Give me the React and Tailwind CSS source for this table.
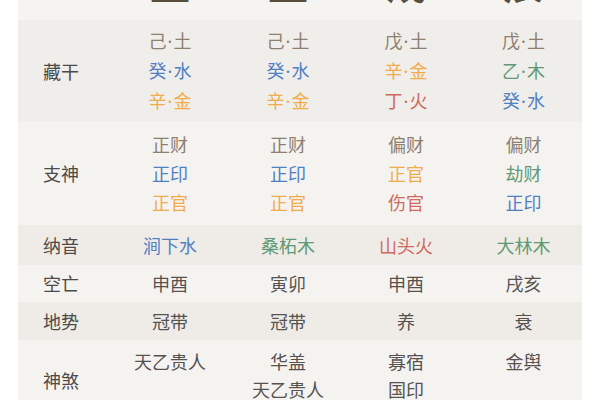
const C = {
  earth: "text-[#8d8070]",
  water: "text-[#4f80c2]",
  metal: "text-[#efab4c]",
  fire: "text-[#cf6a5e]",
  wood: "text-[#5e9a74]",
  plain: "text-[#555250]",
};

const pillars = ["丑", "丑", "戌", "辰"];

const rows = [
  {
    label: "藏干",
    bg: "bg-[#f0eeea]",
    h: "h-[102px]",
    cells: [
      [["己·土", C.earth], ["癸·水", C.water], ["辛·金", C.metal]],
      [["己·土", C.earth], ["癸·水", C.water], ["辛·金", C.metal]],
      [["戊·土", C.earth], ["辛·金", C.metal], ["丁·火", C.fire]],
      [["戊·土", C.earth], ["乙·木", C.wood], ["癸·水", C.water]],
    ],
  },
  {
    label: "支神",
    bg: "bg-[#f5f3f0]",
    h: "h-[103px]",
    cells: [
      [["正财", C.earth], ["正印", C.water], ["正官", C.metal]],
      [["正财", C.earth], ["正印", C.water], ["正官", C.metal]],
      [["偏财", C.earth], ["正官", C.metal], ["伤官", C.fire]],
      [["偏财", C.earth], ["劫财", C.wood], ["正印", C.water]],
    ],
  },
  {
    label: "纳音",
    bg: "bg-[#efece8]",
    h: "h-[40px]",
    cells: [
      [["涧下水", C.water]],
      [["桑柘木", C.wood]],
      [["山头火", C.fire]],
      [["大林木", C.wood]],
    ],
  },
  {
    label: "空亡",
    bg: "bg-[#f5f3f0]",
    h: "h-[37px]",
    cells: [[["申酉", C.plain]], [["寅卯", C.plain]], [["申酉", C.plain]], [["戌亥", C.plain]]],
  },
  {
    label: "地势",
    bg: "bg-[#efece8]",
    h: "h-[38px]",
    cells: [[["冠带", C.plain]], [["冠带", C.plain]], [["养", C.plain]], [["衰", C.plain]]],
  },
];

const shensha = [["天乙贵人"], ["华盖", "天乙贵人"], ["寡宿", "国印"], ["金舆"]];

// the middle dot would be full width in the CJK font, so draw it in a latin one
function Text({ t }) {
  const parts = t.split("·");
  if (parts.length < 2) return t;
  return (
    <>
      {parts[0]}
      <span className="font-['Noto_Sans'] mx-[1px]">·</span>
      {parts[1]}
    </>
  );
}

function Cell({ items }) {
  return (
    <div className="flex flex-col items-center justify-center leading-[29px]">
      {items.map(([t, c], i) => (
        <span key={i} className={c}>
          <Text t={t} />
        </span>
      ))}
    </div>
  );
}

export default function App() {
  return (
    <div
      className="w-[600px] h-[400px] overflow-hidden bg-white px-[18px] text-[18px]"
      style={{ fontFamily: '"Noto Sans CJK SC", "Noto Sans", sans-serif' }}
    >
      <div className="w-[564px] flex flex-col">
        {/* pillar glyphs, only their feet show */}
        <div className="h-[20px] overflow-hidden bg-[#f6f4f1] grid grid-cols-[93px_118px_118px_118px_117px]">
          <div />
          {pillars.map((p, i) => (
            <div key={i} className="flex justify-center">
              <span className="text-[40px] font-bold leading-none mt-[-38px] text-[#574f3c]">{p}</span>
            </div>
          ))}
        </div>

        {rows.map((r) => (
          <div
            key={r.label}
            className={`${r.bg} ${r.h} grid grid-cols-[93px_118px_118px_118px_117px] items-center`}
          >
            <div className="pl-[25px] text-[#4d4a47]">{r.label}</div>
            {r.cells.map((items, i) => (
              <Cell key={i} items={items} />
            ))}
          </div>
        ))}

        <div className="bg-[#f5f3f0] h-[80px] grid grid-cols-[93px_118px_118px_118px_117px]">
          <div className="pl-[25px] pt-[27px] text-[#4d4a47]">神煞</div>
          {shensha.map((items, i) => (
            <div key={i} className="flex flex-col items-center pt-[7px] leading-[28px] text-[#555250]">
              {items.map((t) => (
                <span key={t}>{t}</span>
              ))}
            </div>
          ))}
        </div>
      </div>
    </div>
  );
}
